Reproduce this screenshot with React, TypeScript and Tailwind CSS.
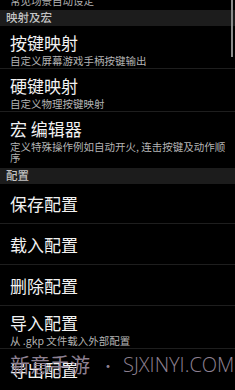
const font = { fontFamily: '"Noto Sans CJK SC", "Noto Sans", sans-serif' };

type Item = { title: string; sub?: string; h: string };

function SectionHeader({ label }: { label: string }) {
  return (
    <div className="flex h-[16px] items-center bg-[#1c1c1c] pl-[6px] text-[11.5px] font-medium leading-none text-[#c4c4c4]">
      {label}
    </div>
  );
}

function Row({ item, last }: { item: Item; last?: boolean }) {
  if (!item.sub) {
    return (
      <div className={`flex ${item.h} items-center pl-[10px] ${last ? "" : "border-b border-[#1e1e1e]"}`}>
        <span className="text-[17px] leading-none text-[#f2f2f2]">{item.title}</span>
      </div>
    );
  }
  return (
    <div className={`${item.h} pl-[10px] pr-[5px] pt-[7px] ${last ? "" : "border-b border-[#1e1e1e]"}`}>
      <div className="text-[17px] leading-[19px] text-[#f2f2f2]">{item.title}</div>
      <div className="mt-[3px] text-[10.5px] leading-[11px] text-[#b4b4b4]">{item.sub}</div>
    </div>
  );
}

const mapping: Item[] = [
  { title: "按键映射", sub: "自定义屏幕游戏手柄按键输出", h: "h-[44px]" },
  { title: "硬键映射", sub: "自定义物理按键映射", h: "h-[45px]" },
  { title: "宏 编辑器", sub: "定义特殊操作例如自动开火, 连击按键及动作顺序", h: "h-[57px]" },
];

const config: Item[] = [
  { title: "保存配置", h: "h-[42px]" },
  { title: "载入配置", h: "h-[42px]" },
  { title: "删除配置", h: "h-[42px]" },
  { title: "导入配置", sub: "从 .gkp 文件载入外部配置", h: "h-[44px]" },
  { title: "导出配置", h: "h-[42px]" },
];

export default function App() {
  return (
    <div className="relative flex h-[390px] w-[235px] flex-col overflow-hidden bg-black" style={font}>
      {/* partial row cut off at the top */}
      <div className="h-[10px] shrink-0 overflow-hidden pl-[10px]">
        <div className="-mt-[5px] text-[10.5px] leading-[11px] text-[#b4b4b4]">常见场景自动设定</div>
      </div>

      <SectionHeader label="映射及宏" />
      {mapping.map((it, i) => (
        <Row key={it.title} item={it} last={i === mapping.length - 1} />
      ))}

      <SectionHeader label="配置" />
      {config.map((it, i) => (
        <Row key={it.title} item={it} last={i === config.length - 1} />
      ))}

      {/* scrollbar */}
      <div className="absolute right-[2px] top-0 h-[57px] w-[2px] bg-[#8c8c8c]" />

      {/* watermark */}
      <div
        className="pointer-events-none absolute left-[10px] top-[351px] flex items-center whitespace-nowrap text-[#8e8092]"
        style={{ fontFamily: '"Noto Sans CJK SC", sans-serif' }}
      >
        <span className="text-[20px] leading-[28px]">新意手游</span>
        <span className="ml-[11px] text-[14px] leading-[28px]">•</span>
        <span
          className="ml-[8px] text-[20px] font-light leading-[28px]"
          style={{ fontFamily: '"Open Sans", "Noto Sans", sans-serif' }}
        >
          SJXINYI.COM
        </span>
      </div>
    </div>
  );
}
